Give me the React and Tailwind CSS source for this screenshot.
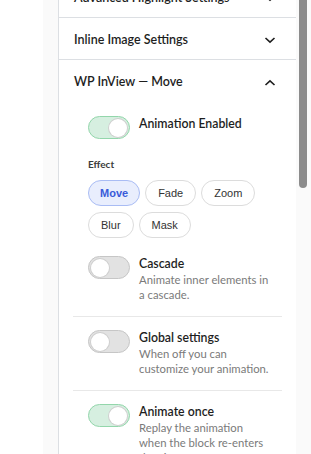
import React from "react";

const EFFECTS = ["Move", "Fade", "Zoom", "Blur", "Mask"];

function Chevron({ up = false }) {
  return (
    <svg
      className="h-[8px] w-[12px] text-[#1e1e1e]"
      viewBox="0 0 12 8"
      fill="none"
      stroke="currentColor"
      strokeWidth="1.6"
    >
      <path d={up ? "M1.5 6 6 1.8 10.5 6" : "M1.5 2 6 6.2 10.5 2"} />
    </svg>
  );
}

function Toggle({ on }) {
  return (
    <span
      className={
        on
          ? "flex h-[23px] w-[42px] shrink-0 items-center justify-end rounded-full border-[1.5px] border-[#93d6ab] bg-[#d6efe0] px-[2px]"
          : "flex h-[23px] w-[42px] shrink-0 items-center justify-start rounded-full border-[1.5px] border-[#c6c6c6] bg-[#e2e2e2] px-[2px]"
      }
    >
      <span className="h-[18px] w-[18px] rounded-full bg-white shadow-[0_0_0_1px_#cfcfcf]" />
    </span>
  );
}

function PanelHeader({ title, open, last }) {
  return (
    <div
      className={
        last
          ? "flex h-[42px] items-center justify-between pl-[15px] pr-[20px] pt-[3px]"
          : "flex h-[42px] items-center justify-between border-b border-[#dcdfe3] pl-[15px] pr-[20px] pt-[3px]"
      }
    >
      <span className="text-[12.5px] font-semibold text-[#1e1e1e]">{title}</span>
      <Chevron up={open} />
    </div>
  );
}

function ToggleRow({ on, title, desc, bordered, textWidth }) {
  return (
    <div
      className={
        bordered
          ? "flex items-start gap-[9px] border-b border-[#e8e8e8] pl-[15px] pb-[14px] pt-[13px]"
          : "flex items-start gap-[9px] pl-[15px] pb-[14px] pt-[13px]"
      }
    >
      <Toggle on={on} />
      <div className={textWidth}>
        <p className="text-[12.3px] font-semibold leading-[16px] text-[#1e1e1e]">{title}</p>
        <p className="text-[11.3px] leading-[15px] text-[#7a7a7a]">{desc}</p>
      </div>
    </div>
  );
}

export default function App() {
  return (
    <div className="flex h-[454px] w-[311px] overflow-hidden bg-white font-['Lato',sans-serif]">
      <div className="w-[43px] shrink-0 bg-white" />
      <div className="w-[15px] shrink-0 bg-[#fafafa]" />

      <div className="w-[238px] shrink-0 border-l border-[#dcdfe3] bg-white">
        <div className="-mt-[24px]">
          <PanelHeader title="Advanced Highlight Settings" />
          <PanelHeader title="Inline Image Settings" />
          <PanelHeader title="WP InView — Move" open last />

          {/* Open panel body */}
          <div className="px-[14px] pt-[14px]">
            <div className="flex items-start gap-[9px] px-[15px]">
              <Toggle on />
              <p className="text-[12.3px] font-semibold leading-[16px] text-[#1e1e1e]">Animation Enabled</p>
            </div>

            <div className="px-[15px] pt-[19px]">
              <p className="text-[10px] font-bold leading-[12px] text-[#3c3c3c]">Effect</p>
              <div className="mt-[10px] flex w-[180px] flex-wrap gap-x-[5px] gap-y-[6px] font-['Liberation_Sans',Arial,sans-serif]">
                {EFFECTS.map((e) => (
                  <span
                    key={e}
                    className={
                      e === "Move"
                        ? "flex h-[26px] items-center rounded-full border border-[#a9bcf4] bg-[#e9eefd] px-[11px] text-[11px] font-bold text-[#3a5bd9]"
                        : "flex h-[26px] items-center rounded-full border border-[#dcdcdc] bg-white px-[12px] text-[11px] text-[#333]"
                    }
                  >
                    {e}
                  </span>
                ))}
              </div>
            </div>

            <div className="pt-[5px]">
              <ToggleRow
                title="Cascade"
                desc="Animate inner elements in a cascade."
                textWidth="w-[130px] shrink-0"
                bordered
              />
              <ToggleRow
                title="Global settings"
                desc="When off you can customize your animation."
                textWidth="w-[135px] shrink-0"
                bordered
              />
              <ToggleRow
                on
                title="Animate once"
                desc="Replay the animation when the block re-enters the viewport."
                textWidth="w-[128px] shrink-0"
              />
            </div>
          </div>
        </div>
      </div>

      <div className="w-[15px] shrink-0 bg-[#fafafa] pl-[3px]">
        <div className="h-[188px] w-[8px] rounded-b-full bg-[#8c8c8c]" />
      </div>
    </div>
  );
}
